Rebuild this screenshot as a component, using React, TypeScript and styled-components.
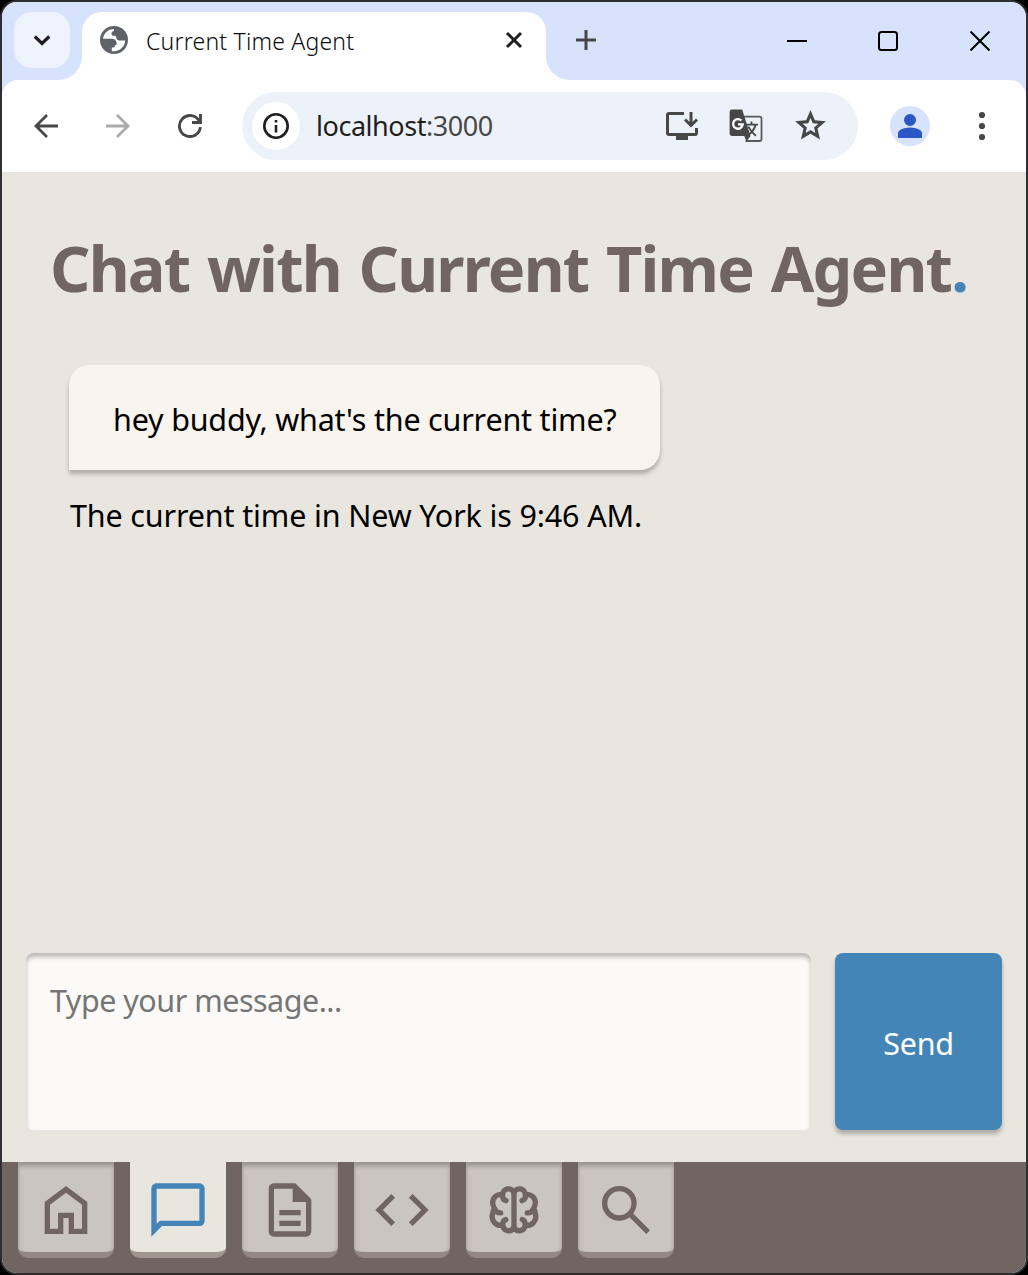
import React from "react";
import styled, { createGlobalStyle } from "styled-components";

const GlobalStyle = createGlobalStyle`
  *, *::before, *::after { box-sizing: border-box; }
  body { margin: 0; background: #000; font-family: "Noto Sans", "Open Sans", sans-serif; }
  button, textarea { font: inherit; margin: 0; border: 0; padding: 0; }
  svg { display: block; flex: none; }
`;

const Window = styled.div`
  width: 1028px;
  height: 1275px;
  display: flex;
  flex-direction: column;
  border: 2px solid #2f2f31;
  border-radius: 17px;
  overflow: hidden;
  background: #d7e3fc;
`;

const TabStrip = styled.header`
  height: 78px;
  flex: none;
  display: flex;
  background: #d7e3fc;
`;

const TabSearch = styled.button`
  width: 56px;
  height: 56px;
  margin: 10px 12px 0 12px;
  border-radius: 18px;
  background: #eef3fe;
  display: grid;
  place-items: center;
`;

const Tab = styled.div`
  position: relative;
  width: 464px;
  height: 68px;
  margin-top: 10px;
  padding: 0 20px 12px 17px;
  display: flex;
  align-items: center;
  background: #fff;
  border-radius: 20px 20px 0 0;
  &::before, &::after {
    content: "";
    position: absolute;
    bottom: 0;
    width: 24px;
    height: 24px;
  }
  &::before { left: -24px; background: radial-gradient(circle at 0 0, transparent 23.5px, #fff 24.5px); }
  &::after { right: -24px; background: radial-gradient(circle at 100% 0, transparent 23.5px, #fff 24.5px); }
`;

const TabTitle = styled.span`
  flex: 1;
  margin: 2px 0 0 17px;
  font-size: 23px;
  line-height: 32px;
  font-weight: 300;
  letter-spacing: 0.2px;
  white-space: nowrap;
  color: #0c0c0c;
`;

const NewTab = styled.button`
  width: 32px;
  height: 32px;
  margin: 22px 0 0 24px;
  background: none;
  display: grid;
  place-items: center;
`;

const WindowControls = styled.div`
  margin-left: auto;
  height: 78px;
  display: flex;
`;

const Control = styled.button`
  width: 92px;
  height: 78px;
  background: none;
  display: grid;
  place-items: center;
  &:first-child { padding-left: 2px; }
`;

const Toolbar = styled.div`
  height: 93px;
  flex: none;
  display: flex;
  align-items: center;
  padding: 0 24px 1px 24px;
  background: #fff;
  border-radius: 16px 16px 0 0;
  border-bottom: 1px solid #e2e5e3;
`;

const ToolButton = styled.button<{ $gap?: number }>`
  width: 40px;
  height: 40px;
  margin-right: ${(p) => p.$gap ?? 0}px;
  background: none;
  display: grid;
  place-items: center;
`;

const AddressBar = styled.div`
  width: 616px;
  height: 68px;
  margin-right: 32px;
  padding: 0 28px 0 10px;
  border-radius: 34px;
  background: #edf2fa;
  display: flex;
  align-items: center;
`;

const SiteInfo = styled.span`
  width: 48px;
  height: 48px;
  border-radius: 50%;
  background: #fff;
  display: grid;
  place-items: center;
`;

const Url = styled.span`
  flex: 1;
  margin-left: 16px;
  font-size: 27px;
  line-height: 40px;
  letter-spacing: -0.45px;
  white-space: nowrap;
  color: #1f1f1f;
  span { color: #474747; }
`;

const Avatar = styled.span`
  width: 40px;
  height: 40px;
  margin-right: 32px;
  border-radius: 50%;
  background: #d7e3fc;
  display: grid;
  place-items: center;
`;

const Page = styled.main`
  flex: 1;
  min-height: 0;
  display: flex;
  flex-direction: column;
  background: #e9e6df;
`;

const Title = styled.h1`
  margin: 51px 0 1px 48px;
  font-size: 63px;
  line-height: 88px;
  font-weight: 700;
  letter-spacing: -1.78px;
  word-spacing: 3px;
  white-space: nowrap;
  color: #706561;
  span { color: #4485b8; }
`;

const Messages = styled.section`
  flex: 1;
  padding: 52px 67px 0;
  display: flex;
  flex-direction: column;
  align-items: flex-start;
  font-size: 30.5px;
  line-height: 44px;
  letter-spacing: -0.2px;
  color: #000;
  white-space: nowrap;
`;

const UserMessage = styled.p`
  width: 591px;
  height: 105px;
  margin: 0;
  padding: 32px 0 0 44px;
  background: #f9f4ee;
  border-radius: 20px 20px 20px 0;
  box-shadow: 0 4px 4px rgba(0, 0, 0, 0.25);
`;

const AgentMessage = styled.p`
  margin: 23px 0 0 1px;
  letter-spacing: -0.15px;
`;

const Composer = styled.form`
  display: flex;
  gap: 24px;
  padding: 0 24px 32px;
`;

const MessageInput = styled.textarea`
  width: 785px;
  height: 177px;
  padding: 25px 24px;
  resize: none;
  border-radius: 8px;
  background: #fbfaf8;
  box-shadow: inset 0 4px 4px rgba(0, 0, 0, 0.25);
  font-size: 30.5px;
  line-height: 44px;
  letter-spacing: -0.5px;
  color: #000;
  &::placeholder { color: #757575; opacity: 1; }
`;

const SendButton = styled.button`
  width: 167px;
  height: 177px;
  padding-top: 2px;
  border-radius: 8px;
  background: #4485b8;
  box-shadow: 0 4px 4px rgba(0, 0, 0, 0.25);
  font-size: 30.5px;
  letter-spacing: -0.3px;
  color: #fff;
`;

const BottomNav = styled.nav`
  height: 111px;
  flex: none;
  display: flex;
  gap: 16px;
  padding-left: 16px;
  background: #706561;
`;

const NavItem = styled.a<{ $active?: boolean }>`
  width: 96px;
  height: 96px;
  display: grid;
  place-items: center;
  border-radius: 0 0 10px 10px;
  border-bottom: 6px solid ${(p) => (p.$active ? "#a0958f" : "#938883")};
  background: ${(p) => (p.$active ? "#e9e6df" : "#cbc5bf")};
  color: ${(p) => (p.$active ? "#4485b8" : "#706561")};
  box-shadow: ${(p) => (p.$active ? "none" : "inset 0 4px 4px rgba(0, 0, 0, 0.25)")};
  svg { margin-top: 6px; }
`;

const Glyph = ({ d, size = 64, color = "currentColor" }: { d: string; size?: number; color?: string }) => (
  <svg width={size} height={size} viewBox="0 0 24 24" fill={color}>
    <path d={d} />
  </svg>
);

const HOME = "M6 19h3v-6h6v6h3v-9l-6-4.5L6 10Zm-2 2V9l8-6 8 6v12h-7v-6h-2v6Z";
const CHAT = "M20 2H4c-1.1 0-2 .9-2 2v18l4-4h14c1.1 0 2-.9 2-2V4c0-1.1-.9-2-2-2zm0 14H5.17L4 17.17V4h16v12z";
const DOC = "M8 16h8v2H8zm0-4h8v2H8zm6-10H6c-1.1 0-2 .9-2 2v16c0 1.1.89 2 1.99 2H18c1.1 0 2-.9 2-2V8l-6-6zm4 18H6V4h7v5h5v11z";
const CODE = "M9.4 16.6L4.8 12l4.6-4.6L8 6l-6 6 6 6 1.4-1.4zm5.2 0l4.6-4.6-4.6-4.6L16 6l6 6-6 6-1.4-1.4z";
const SEARCH = "m19.6 21-6.3-6.3q-.75.6-1.725.95Q10.6 16 9.5 16q-2.725 0-4.612-1.887Q3 12.225 3 9.5q0-2.725 1.888-4.612Q6.775 3 9.5 3q2.725 0 4.613 1.888Q16 6.775 16 9.5q0 1.1-.35 2.075-.35.975-.95 1.725l6.3 6.3ZM9.5 14q1.875 0 3.188-1.312Q14 11.375 14 9.5q0-1.875-1.312-3.188Q11.375 5 9.5 5 7.625 5 6.312 6.312 5 7.625 5 9.5q0 1.875 1.312 3.188Q7.625 14 9.5 14Z";
const STAR = "m8.85 16.825 3.15-1.9 3.15 1.925-.825-3.6 2.775-2.4-3.65-.325-1.45-3.4-1.45 3.375-3.65.325 2.775 2.425ZM5.825 21l1.625-7.025L2 9.25l7.2-.625L12 2l2.8 6.625 7.2.625-5.45 4.725L18.175 21 12 17.275Z";
const PERSON = "M12 12q-1.65 0-2.825-1.175T8 8q0-1.65 1.175-2.825T12 4q1.65 0 2.825 1.175T16 8q0 1.65-1.175 2.825T12 12Zm-8 8v-2.8q0-.85.438-1.562.437-.713 1.162-1.088 1.55-.775 3.15-1.163Q10.35 13 12 13t3.25.387q1.6.388 3.15 1.163.725.375 1.162 1.088Q20 16.35 20 17.2V20Z";

const Lobe = () => (
  <path d="M12 5.4A2.25 2.25 0 0 0 7.700 6.200 3.100 3.100 0 0 0 4 9.300c0 .8.300 1.500.700 2.100-.450.600-.700 1.200-.700 2a3.300 3.300 0 0 0 3.800 4.300A2.250 2.250 0 0 0 12 18.600M7.700 6.200c-.1 1.300.5 2.100 1.300 2.300M4.700 11.400c.3 1.200 1.200 1.700 2.300 1.700M7.800 17.500c0-1.100.400-1.700 1.100-1.900" />
);

const BrainIcon = () => (
  <svg width="64" height="64" viewBox="0 0 24 24" fill="none" stroke="currentColor" strokeWidth="2" strokeLinecap="round" strokeLinejoin="round">
    <Lobe />
    <g transform="matrix(-1 0 0 1 24 0)"><Lobe /></g>
    <path d="M12 5v14" />
  </svg>
);

const InstallIcon = () => (
  <svg width="36" height="32" viewBox="0 0 36 32" fill="none" stroke="#474747" strokeWidth="3">
    <path d="M20 3.500H5a1.500 1.500 0 0 0-1.500 1.500v18a1.500 1.500 0 0 0 1.500 1.500h26a1.500 1.500 0 0 0 1.500-1.500V18" />
    <path d="M27 2v13.500M21 9.500l6 6 6-6" />
    <path d="M12 28h12" strokeWidth="4" />
  </svg>
);

const TranslateIcon = () => (
  <svg width="36" height="36" viewBox="0 0 36 36">
    <path d="M15.500 8.700H31.500a2 2 0 0 1 2 2V31a2 2 0 0 1-2 2H17.500" fill="none" stroke="#5a5b5d" strokeWidth="1.800" />
    <path d="M4 1.600h10.200L22.500 28l-4 5.500-2.200-5.500H4a2.400 2.400 0 0 1-2.400-2.400V4A2.400 2.400 0 0 1 4 1.600z" fill="#474747" />
    <path d="M13.300 12.500a4.800 4.800 0 1 0 1.400 3.900H10" fill="none" stroke="#fff" strokeWidth="2.300" />
    <path d="M17.500 16.600h12.500M23.500 13.500v3M27.500 16.800c-1 4.800-4 8.200-8 10.800M20.500 18.500c1.500 4 4 6 7.300 9.300" fill="none" stroke="#474747" strokeWidth="1.900" />
  </svg>
);

const GlobeIcon = () => (
  <svg width="30" height="30" viewBox="-1 -1 30 30">
    <circle cx="14" cy="14" r="14" fill="#5f6368" />
    <path d="M3 12.800C3.300 7.500 8 3 14 2.900V5c-1.800.200-2.700 1.300-2.500 2.900.2 1.900 1.500 1.700 3 1.800 1.800.2 1.700 1.600 2.100 2.800.5 1.600 1.700 2 3.400 2h5.200C24.800 20.500 20 25.200 14 25.200h-2.200v-3.700h1.700c1.500 0 1.300-1.400 1.500-2.200 1.600-.1 1.900-1 1.700-2.300-.3-2.700-2.200-4.200-5.200-4.200z" fill="#fff" />
  </svg>
);

export default function App() {
  return (
    <>
      <GlobalStyle />
      <Window>
        <TabStrip>
          <TabSearch>
            <svg width="20" height="20" viewBox="0 0 20 20" fill="none" stroke="#1f1f1f" strokeWidth="3.200"><path d="m2.800 6.500 7.200 7 7.200-7" /></svg>
          </TabSearch>
          <Tab>
            <GlobeIcon />
            <TabTitle>Current Time Agent</TabTitle>
            <svg width="24" height="24" viewBox="0 0 24 24" stroke="#1f1f1f" strokeWidth="3"><path d="m5 5 14 14M19 5 5 19" /></svg>
          </Tab>
          <NewTab>
            <svg width="20" height="20" viewBox="0 0 20 20" stroke="#474747" strokeWidth="3"><path d="M0 10h20M10 0v20" /></svg>
          </NewTab>
          <WindowControls>
            <Control><svg width="20" height="20" viewBox="0 0 20 20" stroke="#000" strokeWidth="2"><path d="M0 10h20" /></svg></Control>
            <Control><svg width="20" height="20" viewBox="0 0 20 20" fill="none" stroke="#000" strokeWidth="2"><rect x="1" y="1" width="18" height="18" rx="2.500" /></svg></Control>
            <Control><svg width="20" height="20" viewBox="0 0 20 20" stroke="#000" strokeWidth="2"><path d="m.5.5 19 19M19.500.5l-19 19" /></svg></Control>
          </WindowControls>
        </TabStrip>
        <Toolbar>
          <ToolButton $gap={32}>
            <svg width="24" height="24" viewBox="0 0 24 24" fill="none" stroke="#474747" strokeWidth="2.800"><path d="M24 12H2M13 1 2 12l11 11" /></svg>
          </ToolButton>
          <ToolButton $gap={32}>
            <svg width="24" height="24" viewBox="0 0 24 24" fill="none" stroke="#ababab" strokeWidth="2.800"><path d="M0 12h22M11 1l11 11-11 11" /></svg>
          </ToolButton>
          <ToolButton $gap={32}>
            <svg width="24" height="24" viewBox="0 0 24 24" fill="none" stroke="#474747" strokeWidth="2.900"><path d="M22.500 0v8.500H14M21.300 7.200A10.500 10.500 0 1 0 22.400 13.200" /></svg>
          </ToolButton>
          <AddressBar>
            <SiteInfo>
              <svg width="26" height="26" viewBox="0 0 26 26" fill="none" stroke="#1f1f1f" strokeWidth="2.600"><circle cx="13" cy="13" r="11.700" /><path d="M13 12v7.500M13 7v2.600" /></svg>
            </SiteInfo>
            <Url>localhost<span>:3000</span></Url>
            <ToolButton $gap={24}><InstallIcon /></ToolButton>
            <ToolButton $gap={24}><TranslateIcon /></ToolButton>
            <ToolButton><Glyph d={STAR} size={37} color="#474747" /></ToolButton>
          </AddressBar>
          <Avatar><Glyph d={PERSON} size={36} color="#2a56c6" /></Avatar>
          <ToolButton>
            <svg width="8" height="30" viewBox="0 0 8 30" fill="#474747"><circle cx="4" cy="4" r="3.100" /><circle cx="4" cy="15" r="3.100" /><circle cx="4" cy="26" r="3.100" /></svg>
          </ToolButton>
        </Toolbar>
        <Page>
          <Title>Chat with Current Time Agent<span>.</span></Title>
          <Messages>
            <UserMessage>hey buddy, what's the current time?</UserMessage>
            <AgentMessage>The current time in New York is 9:46 AM.</AgentMessage>
          </Messages>
          <Composer>
            <MessageInput placeholder="Type your message..." />
            <SendButton type="button">Send</SendButton>
          </Composer>
        </Page>
        <BottomNav>
          <NavItem><Glyph d={HOME} /></NavItem>
          <NavItem $active><Glyph d={CHAT} /></NavItem>
          <NavItem><Glyph d={DOC} /></NavItem>
          <NavItem><Glyph d={CODE} /></NavItem>
          <NavItem><BrainIcon /></NavItem>
          <NavItem><Glyph d={SEARCH} /></NavItem>
        </BottomNav>
      </Window>
    </>
  );
}
